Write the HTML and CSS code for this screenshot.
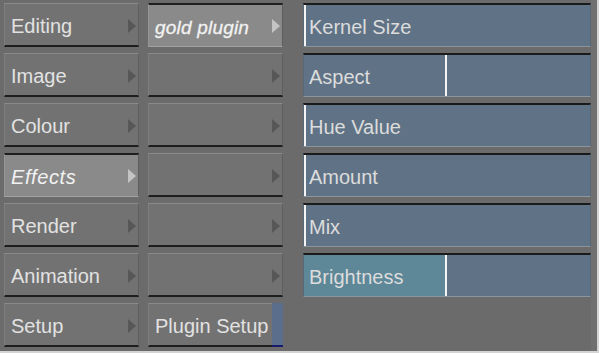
FILE: index.html
```html
<!DOCTYPE html>
<html lang="en">
  <head>
    <meta charset="UTF-8" />
    <title>Plugin menu</title>
    <link rel="stylesheet" href="styles.css">
  </head>
  <body>
    <div class="panel">
      <div class="col menu">
        <div class="btn">Editing<span class="arrow"></span></div>
        <div class="btn">Image<span class="arrow"></span></div>
        <div class="btn">Colour<span class="arrow"></span></div>
        <div class="btn on"><i class="spaced">Effects</i><span class="arrow"></span></div>
        <div class="btn">Render<span class="arrow"></span></div>
        <div class="btn">Animation<span class="arrow"></span></div>
        <div class="btn">Setup<span class="arrow"></span></div>
      </div>
      <div class="col submenu">
        <div class="btn on"><i class="gold">gold plugin</i><span class="arrow"></span></div>
        <div class="btn"><span class="arrow"></span></div>
        <div class="btn"><span class="arrow"></span></div>
        <div class="btn"><span class="arrow"></span></div>
        <div class="btn"><span class="arrow"></span></div>
        <div class="btn"><span class="arrow"></span></div>
        <div class="btn setup">Plugin Setup<span class="tab"></span></div>
      </div>
      <div class="col params">
        <div class="slider"><span class="cursor" style="left: 0%"></span><span class="label">Kernel Size</span></div>
        <div class="slider"><span class="cursor" style="left: 49.3%"></span><span class="label">Aspect</span></div>
        <div class="slider"><span class="cursor" style="left: 0%"></span><span class="label">Hue Value</span></div>
        <div class="slider"><span class="cursor" style="left: 0%"></span><span class="label">Amount</span></div>
        <div class="slider"><span class="cursor" style="left: 0%"></span><span class="label">Mix</span></div>
        <div class="slider"><span class="fill" style="width: 49.3%"></span><span class="cursor" style="left: 49.3%"></span><span class="label">Brightness</span></div>
      </div>
    </div>
  </body>
</html>
```

FILE: styles.css
```css
body {
  margin: 0;
  padding: 0;
  background: #d4d4d4;
  font-family: "Liberation Sans", Arial, sans-serif;
}

.panel {
  width: 597px;
  height: 351px;
  box-sizing: border-box;
  background: #6b6b6b;
  border-right: 6px solid #707070;
  padding: 3px 0 0 4px;
  display: flex;
  gap: 9px;
}

.col {
  display: flex;
  flex-direction: column;
  gap: 6px;
}

.params {
  margin-left: 11px;
}

/* menu buttons */
.btn {
  position: relative;
  width: 135px;
  height: 44px;
  box-sizing: border-box;
  background: #727272;
  border-top: 1px solid #8a8a8a;
  border-left: 1px solid #7e7e7e;
  border-right: 1px solid #5e5e5e;
  border-bottom: 2px solid #1e1e1e;
  color: #e2e2e2;
  font-size: 20px;
  line-height: 44px;
  padding-left: 6px;
  white-space: nowrap;
}

.btn.on {
  background: #8a8a8a;
  border-top: 2px solid #1e1e1e;
  border-bottom: 1px solid #a2a2a2;
  border-left-color: #969696;
  color: #f2f2f2;
}

.btn i {
  font-style: italic;
}

.spaced {
  letter-spacing: 0.6px;
}

.gold {
  font-size: 19px;
  letter-spacing: 0.2px;
  -webkit-text-stroke: 0.3px #f2f2f2;
}

.arrow {
  position: absolute;
  right: 2px;
  top: 15px;
  width: 0;
  height: 0;
  border-top: 7px solid transparent;
  border-bottom: 7px solid transparent;
  border-left: 8px solid #575757;
}

.btn.on .arrow {
  border-left-color: #c4c4c4;
  top: 14px;
}

.btn.setup {
  padding-right: 12px;
}

.tab {
  position: absolute;
  right: -1px;
  top: -1px;
  bottom: -2px;
  width: 11px;
  background: #5b6f8c;
  border-bottom: 2px solid #1a1a6a;
}

/* parameter sliders */
.slider {
  position: relative;
  width: 288px;
  height: 44px;
  box-sizing: border-box;
  background: #607386;
  border-top: 2px solid #1a1a1a;
  border-left: 1px solid #566878;
  border-right: 1px solid #566878;
  border-bottom: 1px solid #8d959c;
  color: #dcdcdc;
  font-size: 20px;
  line-height: 44px;
  overflow: hidden;
}

.fill {
  position: absolute;
  left: 0;
  top: 0;
  bottom: 0;
  background: #5e8798;
}

.cursor {
  position: absolute;
  top: 0;
  bottom: 0;
  width: 2px;
  background: #f4f4f4;
}

.label {
  position: relative;
  padding-left: 5px;
}
```
